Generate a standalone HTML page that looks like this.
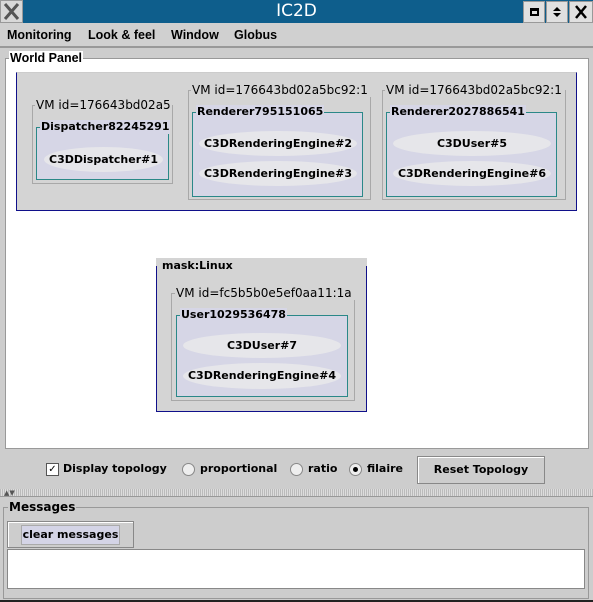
<!DOCTYPE html>
<html><head><style>
*{margin:0;padding:0;box-sizing:border-box}
body{width:593px;height:602px;background:#cdcdcd;position:relative;overflow:hidden;font-family:"DejaVu Sans","Liberation Sans",sans-serif;font-size:11px;font-weight:bold;color:#000}
.a{position:absolute}
.t{position:absolute;background:inherit;padding:0 1px;line-height:14px;white-space:nowrap}
.vm{font-weight:normal;font-size:12px;overflow:hidden}
.ell{position:absolute;background:#e6e6ea;border-radius:50%;text-align:center;line-height:25px;white-space:nowrap}
.m{font-family:"Liberation Sans",sans-serif;font-size:12.5px}
</style></head><body>
<!-- title bar -->
<div class="a" style="left:0;top:0;width:593px;height:23px;background:#0e5e8c"></div>
<div class="a" style="left:0;top:0;width:23px;height:23px;background:#d8d8d8;border:1px solid #999"><svg width="21" height="21"><path d="M4 3L17 18M17 3L4 18" stroke="#555" stroke-width="3"/></svg></div>
<div class="a" style="left:0;top:0;width:593px;text-align:center;color:#fff;font-weight:normal;font-size:17px;line-height:23px">IC2D</div>
<div class="a" style="left:523px;top:1px;width:22px;height:22px;background:#e0e0e0;border:1px solid #999"><div class="a" style="left:6px;top:6px;width:9px;height:8px;border:2px solid #000;border-top-width:3px"></div></div>
<div class="a" style="left:546px;top:1px;width:22px;height:22px;background:#e0e0e0;border:1px solid #999"><svg width="20" height="20"><path d="M6 9L10 5L14 9Z M6 11L10 15L14 11Z" fill="#000"/></svg></div>
<div class="a" style="left:569px;top:1px;width:24px;height:22px;background:#e0e0e0;border:1px solid #999"><svg width="22" height="20"><path d="M6 4L16 16M16 4L6 16" stroke="#000" stroke-width="2.5"/></svg></div>
<!-- menu -->
<div class="a" style="left:0;top:23px;width:593px;height:25px;background:#d0d0d0;border-bottom:2px solid #999"></div>
<div class="a m" style="left:7px;top:28px">Monitoring</div>
<div class="a m" style="left:88px;top:28px">Look &amp; feel</div>
<div class="a m" style="left:171px;top:28px">Window</div>
<div class="a m" style="left:234px;top:28px">Globus</div>
<!-- world panel -->
<div class="a" style="left:5px;top:58px;width:584px;height:391px;background:#fff;border:1px solid #999"></div>
<div class="t m" style="left:9px;top:51px;background:#fff">World Panel</div>
<!-- host 1 -->
<div class="a" style="left:16px;top:72px;width:561px;height:139px;background:#d4d4d4;border:1px solid #10108a;border-top-color:#ccc"></div>
<div class="a" style="left:32px;top:105px;width:141px;height:79px;border:1px solid #a8a8a8;background:#d4d4d4"></div>
<div class="t vm" style="left:35px;top:98px;background:#d4d4d4;width:137px">VM id=176643bd02a5</div>
<div class="a" style="left:36px;top:127px;width:133px;height:53px;border:1px solid #2a8888;background:#d6d6e6"></div>
<div class="t" style="left:40px;top:120px;background:#d6d6e6">Dispatcher82245291</div>
<div class="ell" style="left:44px;top:147px;width:119px;height:25px">C3DDispatcher#1</div>

<div class="a" style="left:188px;top:90px;width:183px;height:110px;border:1px solid #a8a8a8;background:#d4d4d4;overflow:hidden"></div>
<div class="t vm" style="left:191px;top:83px;background:#d4d4d4;width:180px">VM id=176643bd02a5bc92:1</div>
<div class="a" style="left:192px;top:112px;width:171px;height:85px;border:1px solid #2a8888;background:#d6d6e6"></div>
<div class="t" style="left:196px;top:105px;background:#d6d6e6">Renderer795151065</div>
<div class="ell" style="left:199px;top:131px;width:158px;height:25px">C3DRenderingEngine#2</div>
<div class="ell" style="left:199px;top:161px;width:158px;height:25px">C3DRenderingEngine#3</div>

<div class="a" style="left:382px;top:90px;width:184px;height:110px;border:1px solid #a8a8a8;background:#d4d4d4"></div>
<div class="t vm" style="left:385px;top:83px;background:#d4d4d4;width:180px">VM id=176643bd02a5bc92:1</div>
<div class="a" style="left:386px;top:112px;width:171px;height:85px;border:1px solid #2a8888;background:#d6d6e6"></div>
<div class="t" style="left:390px;top:105px;background:#d6d6e6">Renderer2027886541</div>
<div class="ell" style="left:393px;top:131px;width:158px;height:25px">C3DUser#5</div>
<div class="ell" style="left:393px;top:161px;width:158px;height:25px">C3DRenderingEngine#6</div>

<!-- mask Linux -->
<div class="a" style="left:156px;top:265px;width:211px;height:147px;background:#d4d4d4;border:1px solid #10108a"></div>
<div class="a" style="left:156px;top:258px;width:211px;height:8px;background:#d4d4d4"></div>
<div class="t" style="left:161px;top:259px;background:#d4d4d4">mask:Linux</div>
<div class="a" style="left:171px;top:293px;width:184px;height:108px;border:1px solid #a8a8a8;background:#d4d4d4"></div>
<div class="t vm" style="left:175px;top:286px;background:#d4d4d4;width:180px">VM id=fc5b5b0e5ef0aa11:1a</div>
<div class="a" style="left:176px;top:315px;width:172px;height:82px;border:1px solid #2a8888;background:#d6d6e6"></div>
<div class="t" style="left:180px;top:308px;background:#d6d6e6">User1029536478</div>
<div class="ell" style="left:183px;top:333px;width:158px;height:25px">C3DUser#7</div>
<div class="ell" style="left:183px;top:363px;width:158px;height:26px">C3DRenderingEngine#4</div>

<!-- controls -->
<div class="a" style="left:46px;top:463px;width:13px;height:13px;background:#fff;border:1px solid #555;font-size:10px;line-height:11px;text-align:center">✓</div>
<div class="a" style="left:63px;top:462px">Display topology</div>
<div class="a" style="left:182px;top:463px;width:13px;height:13px;border-radius:50%;background:#eee;border:1px solid #888"></div>
<div class="a" style="left:200px;top:462px">proportional</div>
<div class="a" style="left:290px;top:463px;width:13px;height:13px;border-radius:50%;background:#eee;border:1px solid #888"></div>
<div class="a" style="left:308px;top:462px">ratio</div>
<div class="a" style="left:349px;top:463px;width:13px;height:13px;border-radius:50%;background:#eee;border:1px solid #888"><div class="a" style="left:3px;top:3px;width:5px;height:5px;border-radius:50%;background:#000"></div></div>
<div class="a" style="left:367px;top:462px">filaire</div>
<div class="a" style="left:417px;top:456px;width:128px;height:28px;border:1px solid #888;box-shadow:inset 1px 1px #fff;text-align:center;line-height:26px">Reset Topology</div>
<!-- splitter -->
<div class="a" style="left:0;top:489px;width:593px;height:8px;background:repeating-linear-gradient(90deg,#bbb 0 1px,#ddd 1px 2px);border-bottom:1px solid #999"></div>
<div class="a" style="left:4px;top:490px;font-size:7px;color:#555;line-height:7px">▲▼</div>
<!-- messages -->
<div class="a" style="left:3px;top:507px;width:586px;height:92px;border:1px solid #999"></div>
<div class="t" style="left:8px;top:500px;background:#cdcdcd;font-size:12px">Messages</div>
<div class="a" style="left:7px;top:521px;width:127px;height:27px;border:1px solid #888;box-shadow:inset 1px 1px #fff"></div>
<div class="a" style="left:21px;top:525px;width:99px;height:20px;background:#d4d4e6;border:1px solid #aaa;text-align:center;line-height:18px;white-space:nowrap">clear messages</div>
<div class="a" style="left:7px;top:549px;width:578px;height:40px;background:#fff;border:1px solid #888"></div>
<div class="a" style="left:0;top:600px;width:593px;height:2px;background:#222"></div>
</body></html>
